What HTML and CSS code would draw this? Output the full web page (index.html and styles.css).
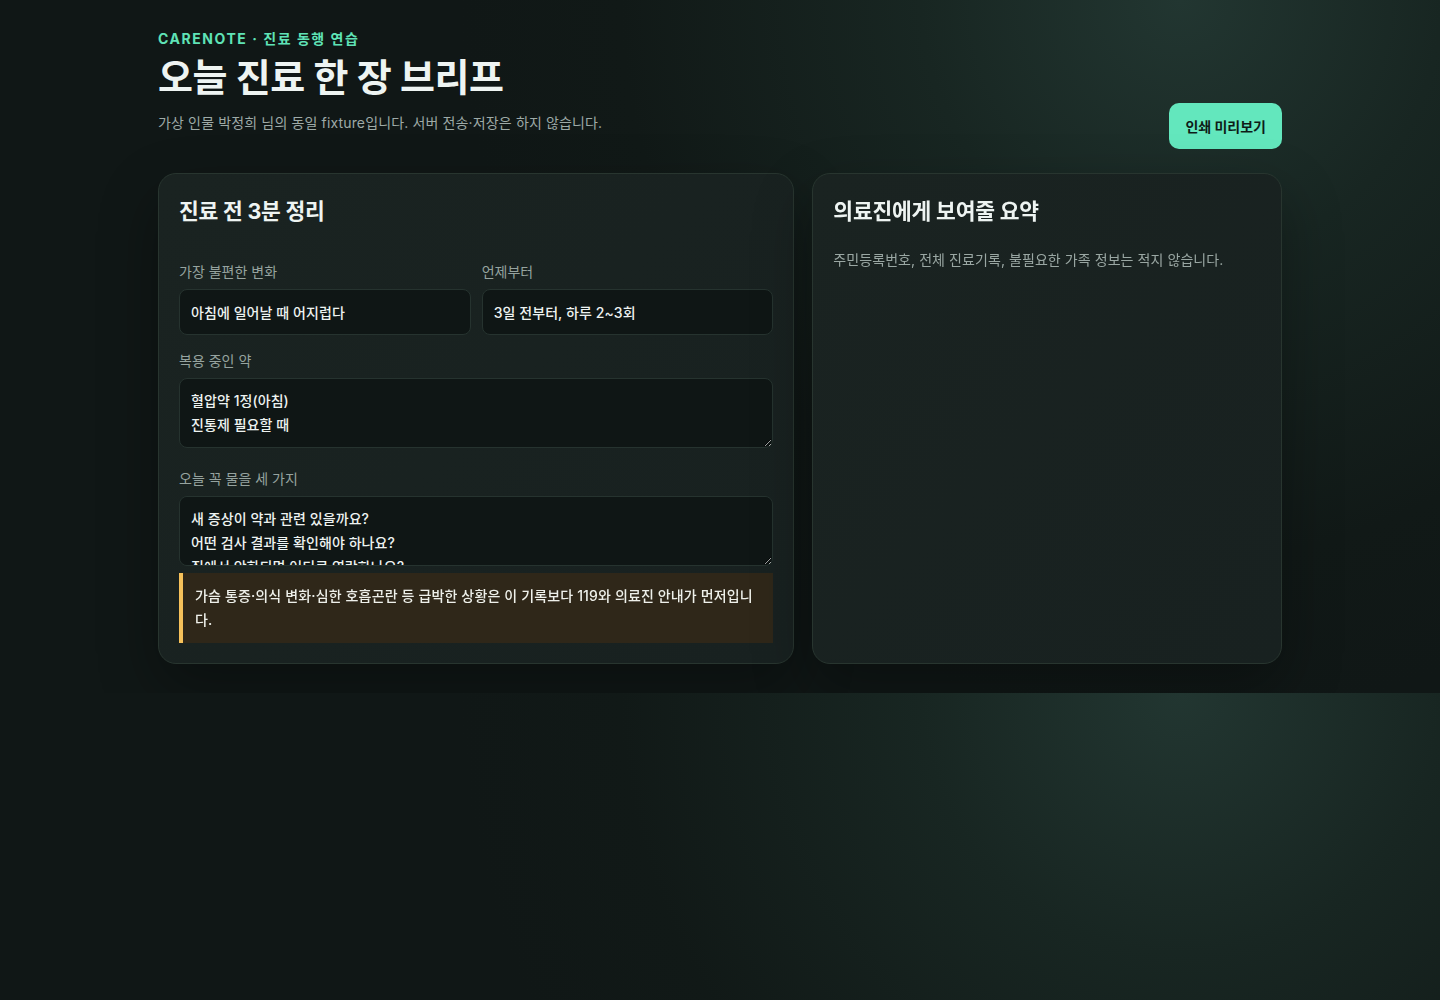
FILE: index.html
```html
<!DOCTYPE html>
<html lang="ko">
<head>
<meta charset="utf-8">
<title>CareNote · 진료 동행 연습</title>
<link rel="stylesheet" href="styles.css">
</head>
<body>
<main class="page">
  <header class="hero">
    <div class="hero-text">
      <div class="eyebrow">CARENOTE · 진료 동행 연습</div>
      <h1 class="title">오늘 진료 한 장 브리프</h1>
      <p class="lead">가상 인물 박정희 님의 동일 fixture입니다. 서버 전송·저장은 하지 않습니다.</p>
    </div>
    <button class="print-btn" type="button">인쇄 미리보기</button>
  </header>

  <section class="grid">
    <div class="card">
      <h2 class="card-title">진료 전 3분 정리</h2>
      <div class="form">
        <div class="row">
          <label class="field">
            <span class="label">가장 불편한 변화</span>
            <input class="input" type="text" value="아침에 일어날 때 어지럽다">
          </label>
          <label class="field">
            <span class="label">언제부터</span>
            <input class="input" type="text" value="3일 전부터, 하루 2~3회">
          </label>
        </div>
        <label class="field field-gap">
          <span class="label">복용 중인 약</span>
          <textarea class="textarea" rows="2">혈압약 1정(아침)
진통제 필요할 때</textarea>
        </label>
        <label class="field field-gap-lg">
          <span class="label">오늘 꼭 물을 세 가지</span>
          <textarea class="textarea" rows="2">새 증상이 약과 관련 있을까요?
어떤 검사 결과를 확인해야 하나요?
집에서 악화되면 어디로 연락하나요?</textarea>
        </label>
        <div class="warning">가슴 통증·의식 변화·심한 호흡곤란 등 급박한 상황은 이 기록보다 119와 의료진 안내가 먼저입니다.</div>
      </div>
    </div>

    <div class="card">
      <h2 class="card-title">의료진에게 보여줄 요약</h2>
      <p class="note">주민등록번호, 전체 진료기록, 불필요한 가족 정보는 적지 않습니다.</p>
    </div>
  </section>
</main>
</body>
</html>
```

FILE: styles.css
```css
* {
  box-sizing: border-box;
}

body {
  margin: 0;
  color: #e8efed;
  font-family: Inter, "Noto Sans CJK KR", sans-serif;
  background-color: #101716;
  background-image: radial-gradient(circle at 82% 0%, #223631 0px, #182622 260px, #111917 560px, #101716 720px);
}

.page {
  width: 1124px;
  margin: 0 auto;
  padding: 29px 0 29px;
}

.hero {
  display: flex;
  justify-content: space-between;
  align-items: flex-end;
  margin-bottom: 24px;
}

.eyebrow {
  font-size: 14px;
  line-height: 20px;
  font-weight: 700;
  letter-spacing: 0.11em;
  color: #5fe3b6;
}

.title {
  margin: 5px 0 0;
  font-size: 38px;
  line-height: 46px;
  font-weight: 700;
  letter-spacing: -0.01em;
  color: #eef4f2;
}

.lead {
  margin: 12px 0 15px;
  font-size: 14px;
  line-height: 22px;
  letter-spacing: 0.01em;
  color: #9eaaa7;
}

.print-btn {
  height: 46px;
  padding: 0 16px;
  border: 0;
  border-radius: 10px;
  background: #63e7bd;
  color: #0e1b17;
  font-family: inherit;
  font-size: 14px;
  font-weight: 700;
}

.grid {
  display: grid;
  grid-template-columns: 1.355fr 1fr;
  gap: 18px;
  align-items: stretch;
}

.card {
  border: 1px solid #28352f;
  border-radius: 18px;
  padding: 22px 20px 20px;
  background: linear-gradient(135deg, #1a2321 0%, #182120 100%);
  box-shadow: 0 24px 60px rgba(0, 0, 0, 0.32);
}

.card-title {
  margin: 0;
  font-size: 21.5px;
  line-height: 30px;
  font-weight: 700;
  letter-spacing: -0.01em;
  color: #eef4f2;
}

.form {
  margin-top: 36px;
}

.row {
  display: grid;
  grid-template-columns: 1fr 1fr;
  gap: 11px;
}

.field {
  display: flex;
  flex-direction: column;
}

.field-gap {
  margin-top: 16px;
}

.field-gap-lg {
  margin-top: 21px;
}

.label {
  font-size: 14px;
  line-height: 20px;
  color: #96a39f;
  margin-bottom: 7px;
}

.input,
.textarea {
  width: 100%;
  border: 1px solid #26332f;
  border-radius: 8px;
  background: #0f1615;
  color: #eef3f1;
  font-family: inherit;
  font-size: 14px;
  font-weight: 500;
  letter-spacing: 0.005em;
}

.input {
  height: 46px;
  padding: 0 11px;
}

.textarea {
  display: block;
  height: 70px;
  padding: 10px 11px;
  line-height: 24px;
  resize: vertical;
}

.warning {
  margin-top: 7px;
  padding: 11px 14px 11px 12px;
  border-left: 4px solid #f6c15a;
  background: #2f2719;
  color: #eef0ea;
  font-size: 14px;
  line-height: 24px;
  font-weight: 500;
  letter-spacing: 0.01em;
}

.note {
  margin: 24px 0 0;
  font-size: 14px;
  line-height: 20px;
  letter-spacing: 0.005em;
  color: #9aa7a3;
}
```
